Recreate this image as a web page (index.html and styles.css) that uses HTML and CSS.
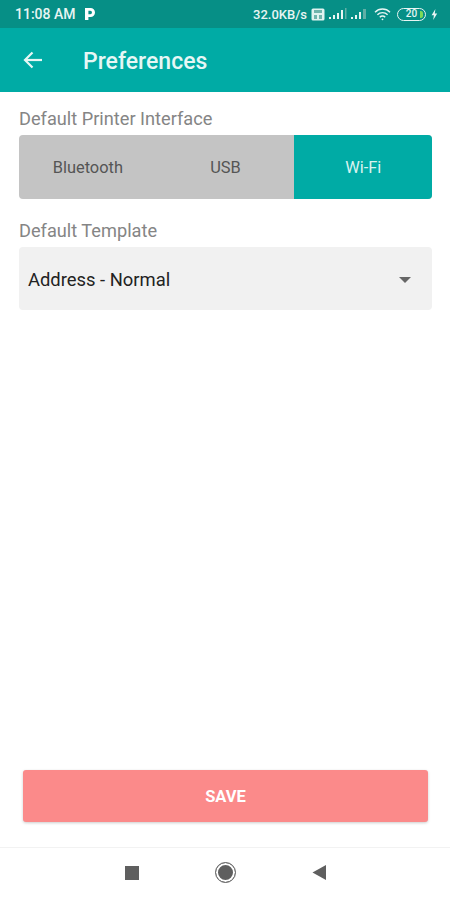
FILE: index.html
```html
<!DOCTYPE html>
<html lang="en">
<head>
  <meta charset="UTF-8">
  <meta name="viewport" content="width=device-width, initial-scale=1.0">
  <title>Preferences</title>
  <link rel="stylesheet" href="styles.css">
</head>
<body>
  <div class="screen">
    <div class="status-bar">
      <div class="status-left">
        <span class="clock">11:08 AM</span>
        <svg class="status-p" width="12" height="14" viewBox="0 0 12 14"><path d="M1 1h5.5a4.5 4.5 0 0 1 0 9H4.4v3H1z M4.4 3.8v3.4h1.9a1.7 1.7 0 0 0 0-3.4z" fill="#fff" fill-rule="evenodd"/></svg>
      </div>
      <div class="status-right">
        <span class="speed">32.0KB/s</span>
        <svg class="hd" width="14" height="13" viewBox="0 0 14 13"><rect x="0.5" y="0.5" width="13" height="12" rx="1.5" fill="#dff3f0"/><rect x="3" y="2" width="8" height="3" fill="#6fb5ad"/><rect x="3" y="7" width="3" height="4" fill="#6fb5ad"/><rect x="8" y="7" width="3" height="4" fill="#6fb5ad"/></svg>
        <svg class="signal" width="20" height="12" viewBox="0 0 20 12">
          <rect x="1" y="9" width="2" height="2" fill="#e8f5f3"/>
          <rect x="5" y="7" width="2" height="4" fill="#e8f5f3"/>
          <rect x="9" y="5" width="2" height="6" fill="#e8f5f3"/>
          <rect x="13" y="2" width="2" height="9" fill="#e8f5f3"/>
          <rect x="17" y="0" width="1.5" height="11" fill="#5fafa6"/>
        </svg>
        <svg class="signal second" width="18" height="12" viewBox="0 0 18 12">
          <rect x="1" y="9" width="2" height="2" fill="#e8f5f3"/>
          <rect x="5" y="7" width="2" height="4" fill="#e8f5f3"/>
          <rect x="9" y="4" width="2" height="7" fill="#e8f5f3"/>
          <rect x="13" y="1" width="3" height="10" fill="#5fafa6"/>
        </svg>
        <svg class="wifi" width="17" height="13" viewBox="0 0 17 13" fill="none" stroke="#e8f5f3" stroke-width="1.4">
          <path d="M1 4.2a10.5 10.5 0 0 1 15 0"/>
          <path d="M3.4 6.8a7 7 0 0 1 10.2 0"/>
          <path d="M5.8 9.2a3.6 3.6 0 0 1 5.4 0"/>
          <circle cx="8.5" cy="11.3" r="0.9" fill="#e8f5f3" stroke="none"/>
        </svg>
        <span class="battery"><span class="battery-level">20</span><span class="battery-tip"></span></span>
        <svg class="bolt" width="7" height="11" viewBox="0 0 7 11"><path d="M4.4 0L0.6 6.2h2.3L2.2 11l4-6.6H3.8z" fill="#e8f5f3"/></svg>
      </div>
    </div>

    <header class="app-bar">
      <svg class="back" width="22" height="22" viewBox="0 0 22 22" fill="none" stroke="#e6f7f5" stroke-width="2.2"><path d="M20 11H3"/><path d="M10.5 3.5L3 11l7.5 7.5"/></svg>
      <h1>Preferences</h1>
    </header>

    <main class="content">
      <label class="field-label">Default Printer Interface</label>
      <div class="segments">
        <div class="segment">Bluetooth</div>
        <div class="segment">USB</div>
        <div class="segment active">Wi-Fi</div>
      </div>

      <label class="field-label second">Default Template</label>
      <div class="select">
        <span>Address - Normal</span>
        <span class="caret"></span>
      </div>
    </main>

    <div class="actions">
      <button class="save">SAVE</button>
    </div>

    <nav class="nav-bar">
      <span class="nav-square"></span>
      <span class="nav-circle"></span>
      <svg width="14" height="15" viewBox="0 0 14 15"><path d="M0.5 7.5L14 0v15z" fill="#5f5f5f"/></svg>
    </nav>
  </div>
</body>
</html>
```

FILE: styles.css
```css
* {
  box-sizing: border-box;
}

body {
  margin: 0;
  background-color: #fff;
  font-family: Roboto, "Liberation Sans", sans-serif;
  color: #333;
}

.screen {
  display: flex;
  flex-direction: column;
  width: 450px;
  height: 900px;
  overflow: hidden;
}

.status-bar {
  display: flex;
  justify-content: space-between;
  align-items: center;
  height: 28px;
  padding: 0 12px 0 15px;
  background-color: #068f86;
  color: #e8f5f3;
  font-size: 13px;
  font-weight: 500;
}

.status-left,
.status-right {
  display: flex;
  align-items: center;
}

.clock {
  font-size: 14px;
}

.status-p {
  margin-left: 8px;
}

.hd {
  margin-left: 4px;
}

.signal {
  margin-left: 3px;
}

.signal.second {
  margin-left: 2px;
}

.wifi {
  margin-left: 6px;
}

.battery {
  display: flex;
  align-items: center;
  justify-content: center;
  position: relative;
  width: 29px;
  height: 13px;
  margin-left: 6px;
  border: 1px solid #e8f5f3;
  border-radius: 6.5px;
  font-size: 10px;
  line-height: 1;
}

.battery-tip {
  position: absolute;
  top: 2px;
  right: 2px;
  width: 3px;
  height: 7px;
  border-radius: 0 2px 2px 0;
  background-color: #7ed957;
}

.bolt {
  margin-left: 5px;
}

.app-bar {
  display: flex;
  align-items: center;
  height: 64px;
  padding-left: 22px;
  background-color: #00aba5;
}

.app-bar h1 {
  margin: 2px 0 0 39px;
  color: #e6f7f5;
  font-size: 23px;
  font-weight: 500;
}

.content {
  flex: 1;
  padding: 17px 18px 0 19px;
}

.field-label {
  display: block;
  height: 26px;
  color: #858585;
  font-size: 18.2px;
  line-height: 20px;
}

.field-label.second {
  margin-top: 22px;
}

.segments {
  display: flex;
  height: 64px;
  border-radius: 4px;
  overflow: hidden;
  background-color: #c4c4c4;
}

.segment {
  display: flex;
  align-items: center;
  justify-content: center;
  width: 137.7px;
  color: #555;
  font-size: 16.4px;
}

.segment.active {
  background-color: #00aba5;
  color: #d8f3f0;
  flex: 1;
}

.select {
  display: flex;
  justify-content: space-between;
  align-items: center;
  height: 63px;
  padding: 2px 21px 0 9px;
  border-radius: 4px;
  background-color: #f1f1f1;
  color: #222;
  font-size: 18.4px;
}

.caret {
  width: 0;
  height: 0;
  border-left: 6px solid transparent;
  border-right: 6px solid transparent;
  border-top: 6px solid #666;
}

.actions {
  padding: 0 22px 25px 23px;
}

.save {
  display: block;
  width: 100%;
  height: 52px;
  border: none;
  border-radius: 3px;
  background-color: #fb8a8a;
  box-shadow: 0 1px 3px rgba(0, 0, 0, 0.2);
  color: #fff;
  font-family: inherit;
  font-size: 16.5px;
  font-weight: 700;
}

.nav-bar {
  display: flex;
  justify-content: center;
  align-items: center;
  gap: 76px;
  height: 53px;
  padding-bottom: 3px;
  border-top: 1px solid #f2f2f2;
}

.nav-square {
  width: 14px;
  height: 14px;
  background-color: #5f5f5f;
}

.nav-circle {
  width: 21px;
  height: 21px;
  border: 1.5px solid #6a6a6a;
  border-radius: 50%;
  background-color: #5f5f5f;
  box-shadow: inset 0 0 0 2px #fff;
}
```
